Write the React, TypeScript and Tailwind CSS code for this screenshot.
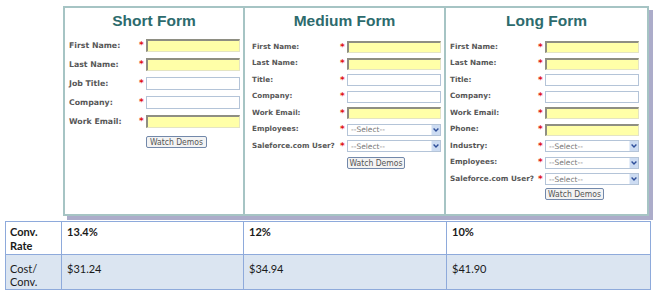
import React from 'react';

type Field = { label: string; kind: 'yellow' | 'white' | 'select' };

const SHORT: Field[] = [
  { label: 'First Name:', kind: 'yellow' },
  { label: 'Last Name:', kind: 'yellow' },
  { label: 'Job Title:', kind: 'white' },
  { label: 'Company:', kind: 'white' },
  { label: 'Work Email:', kind: 'yellow' },
];

const MEDIUM: Field[] = [
  { label: 'First Name:', kind: 'yellow' },
  { label: 'Last Name:', kind: 'yellow' },
  { label: 'Title:', kind: 'white' },
  { label: 'Company:', kind: 'white' },
  { label: 'Work Email:', kind: 'yellow' },
  { label: 'Employees:', kind: 'select' },
  { label: 'Saleforce.com User?', kind: 'select' },
];

const LONG: Field[] = [
  { label: 'First Name:', kind: 'yellow' },
  { label: 'Last Name:', kind: 'yellow' },
  { label: 'Title:', kind: 'white' },
  { label: 'Company:', kind: 'white' },
  { label: 'Work Email:', kind: 'yellow' },
  { label: 'Phone:', kind: 'yellow' },
  { label: 'Industry:', kind: 'select' },
  { label: 'Employees:', kind: 'select' },
  { label: 'Saleforce.com User?', kind: 'select' },
];

const labelFont = { fontFamily: '"DejaVu Sans", Verdana, sans-serif' };

function Input({ kind, h }: { kind: Field['kind']; h: string }) {
  if (kind === 'yellow') {
    return (
      <div
        className={`w-[94px] ${h} bg-[#ffffa8] border-t-2 border-l-2 border-r border-b border-t-[#8e8e82] border-l-[#8e8e82] border-r-[#e4e4c4] border-b-[#e4e4c4]`}
      />
    );
  }
  if (kind === 'white') {
    return <div className={`w-[94px] ${h} bg-white border border-[#b4c4d8]`} />;
  }
  return (
    <div className={`w-[94px] ${h} bg-white border border-[#b4c4d8] flex items-center justify-between`}>
      <span className="pl-[3px] text-[7.5px] leading-none text-[#777]" style={labelFont}>
        --Select--
      </span>
      <span className="w-[9px] h-full bg-[#cddcf2] flex items-center justify-center border-l border-[#e6eef9]">
        <svg width="6" height="4" viewBox="0 0 6 4">
          <path d="M0.6 0.6 L3 3 L5.4 0.6" stroke="#2f4f9a" strokeWidth="1.4" fill="none" />
        </svg>
      </span>
    </div>
  );
}

function Form({
  title,
  fields,
  pad,
  labelW,
  rowH,
  inputH,
  formTop,
  labelSize,
  btnTop,
  btnW,
}: {
  title: string;
  fields: Field[];
  pad: string;
  labelW: string;
  rowH: string;
  inputH: string;
  formTop: string;
  labelSize: string;
  btnTop: string;
  btnW: string;
}) {
  return (
    <div className="flex flex-col h-full">
      <div
        className="mt-[3px] h-[20px] leading-[20px] text-center text-[15.5px] font-bold text-[#2d6b6d]"
        style={{ fontFamily: '"Liberation Sans", Arial, sans-serif' }}
      >
        {title}
      </div>
      <div className={`${formTop} ${pad} flex flex-col`}>
        {fields.map((f) => (
          <div key={f.label} className={`flex items-center ${rowH}`}>
            <div className={`${labelW} ${labelSize} font-bold text-[#575757] whitespace-nowrap`} style={labelFont}>
              {f.label}
            </div>
            <div className="w-[7px] text-[9px] leading-none text-[#e01010] font-bold" style={labelFont}>
              *
            </div>
            <Input kind={f.kind} h={inputH} />
          </div>
        ))}
        <div className={`flex ${btnTop}`}>
          <div className={labelW} />
          <div className="w-[7px]" />
          <div
            className={`${btnW} h-[12px] border border-[#7288aa] rounded-[2px] bg-[#f3f3f3] flex items-center justify-center text-[8.5px] text-[#555] leading-none`}
            style={{ fontFamily: '"DejaVu Sans Condensed", "DejaVu Sans", sans-serif' }}
          >
            Watch Demos
          </div>
        </div>
      </div>
    </div>
  );
}

const App: React.FC = () => {
  const cell = 'border border-[#8eaadb] align-top';
  return (
    <div className="w-[657px] h-[292px] bg-white overflow-hidden flex flex-col">
      {/* forms panel */}
      <div className="ml-[63px] mt-[6px] w-[586px] h-[210px] border-2 border-[#a6c4c4] bg-white shadow-[4px_4px_0_#acacca] flex">
        <div className="w-[180px] border-r-2 border-[#a6c4c4]">
          <Form
            title="Short Form"
            fields={SHORT}
            pad="pl-[4px]"
            labelW="w-[70px]"
            rowH="h-[19px]"
            inputH="h-[13px]"
            formTop="mt-[5px]"
            labelSize="text-[7.8px]"
            btnTop="mt-[5px]"
            btnW="w-[61px]"
          />
        </div>
        <div className="w-[201px] border-r-2 border-[#a6c4c4]">
          <Form
            title="Medium Form"
            fields={MEDIUM}
            pad="pl-[7px]"
            labelW="w-[88px]"
            rowH="h-[16.5px]"
            inputH="h-[12px]"
            formTop="mt-[8px]"
            labelSize="text-[7.2px]"
            btnTop="mt-[2.5px]"
            btnW="w-[58px]"
          />
        </div>
        <div className="w-[201px]">
          <Form
            title="Long Form"
            fields={LONG}
            pad="pl-[4px]"
            labelW="w-[88px]"
            rowH="h-[16.5px]"
            inputH="h-[12px]"
            formTop="mt-[8px]"
            labelSize="text-[7.3px]"
            btnTop="mt-[0.5px]"
            btnW="w-[59px]"
          />
        </div>
      </div>

      {/* results table */}
      <table
        className="ml-[5px] mt-[5px] w-[645px] border-collapse table-fixed text-[11px] text-[#1a1a1a]"
        style={{ fontFamily: 'Lato, "Open Sans", sans-serif' }}
      >
        <colgroup>
          <col className="w-[56px]" />
          <col className="w-[182px]" />
          <col className="w-[203px]" />
          <col className="w-[204px]" />
        </colgroup>
        <tbody>
          <tr className="h-[33px] bg-white font-bold leading-[13.5px]">
            <td className={`${cell} pl-[4px] pt-[3px]`}>
              Conv.
              <br />
              Rate
            </td>
            <td className={`${cell} pl-[5px] pt-[3px]`}>13.4%</td>
            <td className={`${cell} pl-[5px] pt-[3px]`}>12%</td>
            <td className={`${cell} pl-[5px] pt-[3px]`}>10%</td>
          </tr>
          <tr className="h-[35px] bg-[#dbe5f1] leading-[13px]">
            <td className={`${cell} pl-[4px] pt-[7px]`}>
              Cost/
              <br />
              Conv.
            </td>
            <td className={`${cell} pl-[5px] pt-[7px]`}>$31.24</td>
            <td className={`${cell} pl-[5px] pt-[7px]`}>$34.94</td>
            <td className={`${cell} pl-[5px] pt-[7px]`}>$41.90</td>
          </tr>
        </tbody>
      </table>
    </div>
  );
};

export default App;
